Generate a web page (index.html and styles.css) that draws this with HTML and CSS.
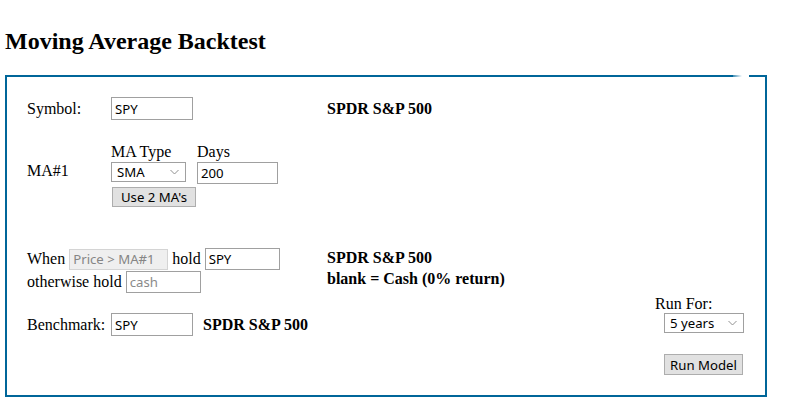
FILE: index.html
```html
<!DOCTYPE html>
<html>
<head>
<meta charset="utf-8">
<title>Moving Average Backtest</title>
<link rel="stylesheet" href="styles.css">
</head>
<body>
<h2 class="title">Moving Average Backtest</h2>
<div class="panel">
  <span class="notch"></span>
  <div class="row row-symbol">
    <span class="label">Symbol:</span>
    <input class="txt w-sym" value="SPY">
    <b class="note note-symbol">SPDR S&amp;P 500</b>
  </div>
  <div class="row row-ma">
    <span class="label label-ma">MA#1</span>
    <div class="ma">
      <div class="ma-fields">
        <div class="field field-type">
          <span class="cap">MA Type</span>
          <select class="sel w-type"><option>SMA</option><option>EMA</option></select>
        </div>
        <div class="field">
          <span class="cap">Days</span>
          <input class="txt w-days" value="200">
        </div>
      </div>
      <button class="btn w-use" type="button">Use 2 MA's</button>
    </div>
  </div>
  <div class="row row-when">
    <div class="when">
      <div class="when-line">
        <span>When</span>
        <input class="txt dis w-price" value="Price &gt; MA#1" disabled>
        <span>hold</span>
        <input class="txt w-hold" value="SPY">
      </div>
      <div class="when-line when-line2">
        <span>otherwise hold</span>
        <input class="txt w-cash" placeholder="cash">
      </div>
    </div>
    <div class="notes">
      <b>SPDR S&amp;P 500</b>
      <b>blank = Cash (0% return)</b>
    </div>
  </div>
  <div class="row row-bottom">
    <div class="bench">
      <span class="label">Benchmark:</span>
      <input class="txt w-sym" value="SPY">
      <b class="note note-bench">SPDR S&amp;P 500</b>
    </div>
    <div class="runfor">
      <span class="runfor-label">Run For:</span>
      <select class="sel w-years"><option>5 years</option><option>10 years</option></select>
      <button class="btn w-run" type="button">Run Model</button>
    </div>
  </div>
</div>
</body>
</html>
```
FILE: styles.css
```css
* { box-sizing: border-box; }

body {
  margin: 0;
  padding: 0 5px;
  background: #fff;
  color: #000;
  font-family: "Liberation Serif", "Times New Roman", serif;
  font-size: 16px;
}

.title {
  margin: 28px 0 21px;
  font-size: 24px;
  line-height: 26px;
  font-weight: bold;
}

.panel {
  position: relative;
  width: 762px;
  border: 2px solid #006699;
  padding: 20px 21px 20px 20px;
}

.notch {
  position: absolute;
  top: -2px;
  left: 726px;
  width: 16px;
  height: 2px;
  background: linear-gradient(to right, rgba(255,255,255,0.25), #fff 9px);
}

.row { display: flex; }

.label { width: 84px; flex: none; }

.txt, .sel, .btn {
  font-family: "Noto Sans", "Liberation Sans", sans-serif;
  font-size: 13.2px;
  color: #000;
  margin: 0;
}

.txt {
  height: 22px;
  border: 1px solid #a0a0a0;
  padding: 0 3px;
  background: #fff;
  outline: none;
}
.txt::placeholder { color: #8a8a8a; }

.dis {
  background: #efefef;
  border-color: #d4d4d4;
  color: #858585;
}

.sel {
  appearance: none;
  -webkit-appearance: none;
  height: 20px;
  border: 1px solid #a0a0a0;
  padding: 0 0 0 5px;
  background: #fff url("data:image/svg+xml;utf8,<svg xmlns='http://www.w3.org/2000/svg' width='9' height='6' viewBox='0 0 9 6'><path d='M0.5 1 L4.5 5 L8.5 1' fill='none' stroke='%23909090' stroke-width='1'/></svg>") no-repeat right 6px center;
  border-radius: 0;
}

.btn {
  height: 20px;
  border: 1px solid #adadad;
  background: #e1e1e1;
  padding: 0;
}

/* row 1 */
.row-symbol { align-items: center; height: 23px; }
.w-sym { width: 82px; height: 23px; }
.note-symbol { margin-left: 134px; }

/* row 2 */
.row-ma { margin-top: 21px; align-items: flex-start; }
.label-ma { margin-top: 21px; }
.ma { display: flex; flex-direction: column; align-items: flex-start; }
.ma-fields { display: flex; }
.field { display: flex; flex-direction: column; }
.field-type { width: 86px; }
.cap { line-height: 20px; margin-bottom: 0; margin-top: 0.5px; }
.w-type { width: 75px; }
.w-days { width: 81px; }
.w-use { width: 84px; margin: 3px 0 0 1px; }

/* row 3 */
.row-when { margin-top: 41.5px; align-items: flex-start; }
.when { width: 300px; }
.when-line { display: flex; align-items: center; gap: 4px; height: 22px; }
.when-line2 { margin-top: 1px; }
.w-price { width: 99px; height: 21px; }
.w-hold { width: 75px; }
.w-cash { width: 75px; }
.notes { display: flex; flex-direction: column; line-height: 21px; margin-top: -1.5px; }

/* bottom */
.row-bottom { margin-top: 2px; align-items: flex-start; }
.bench { display: flex; align-items: center; margin-top: 18px; }
.note-bench { margin-left: 10px; }
.runfor {
  margin-left: auto;
  width: 89px;
  display: flex;
  flex-direction: column;
  align-items: flex-start;
}
.w-years { width: 80px; align-self: flex-end; }
.w-run { width: 79px; height: 21px; align-self: flex-end; margin: 21px 1px 0 0; }
```
